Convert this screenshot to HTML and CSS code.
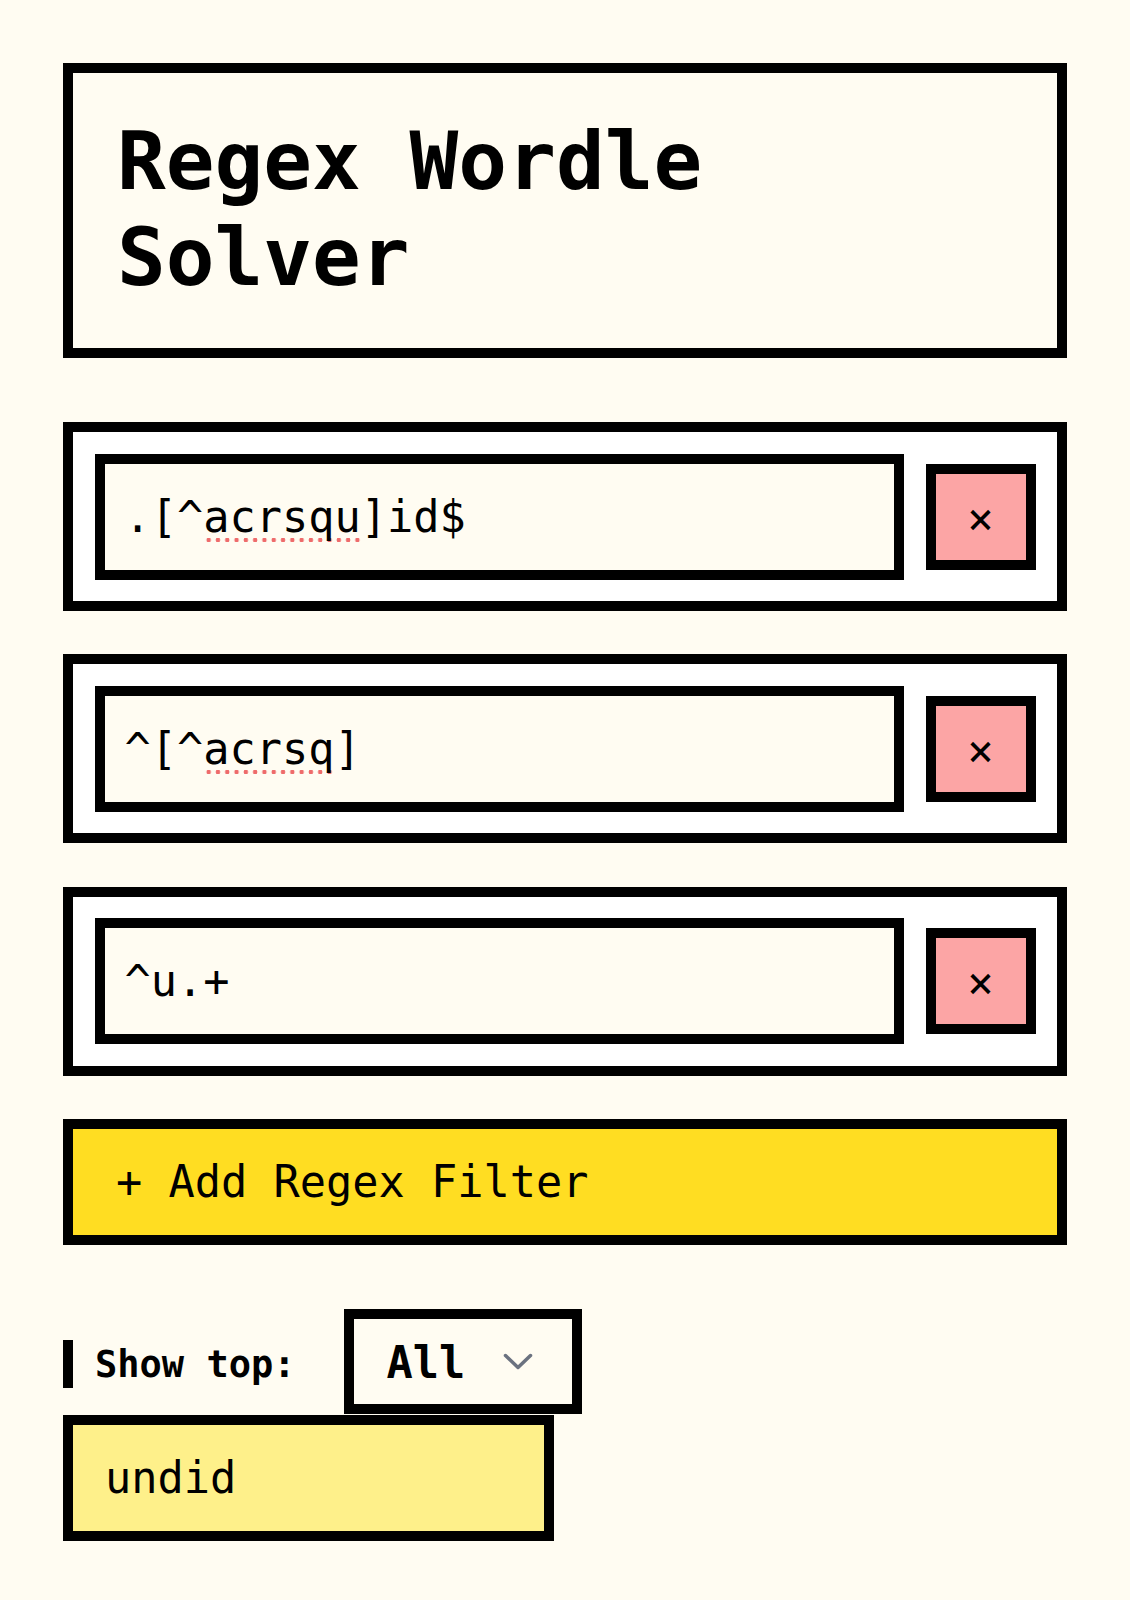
FILE: index.html
```html
<!DOCTYPE html>
<html lang="en">
<head>
<meta charset="utf-8">
<title>Regex Wordle Solver</title>
<link rel="stylesheet" href="styles.css">
</head>
<body>
<main class="app">
  <header class="title-card">
    <h1 class="title">Regex Wordle Solver</h1>
  </header>

  <section class="filters">
    <div class="filter-row">
      <div class="regex-input" role="textbox" contenteditable="true" spellcheck="false">.[^<span class="misspelled">acrsqu</span>]id$</div>
      <button class="delete-btn" type="button" aria-label="Remove filter">×</button>
    </div>
    <div class="filter-row">
      <div class="regex-input" role="textbox" contenteditable="true" spellcheck="false">^[^<span class="misspelled">acrsq</span>]</div>
      <button class="delete-btn" type="button" aria-label="Remove filter">×</button>
    </div>
    <div class="filter-row">
      <div class="regex-input" role="textbox" contenteditable="true" spellcheck="false">^u.+</div>
      <button class="delete-btn" type="button" aria-label="Remove filter">×</button>
    </div>
    <button class="add-btn" type="button">+ Add Regex Filter</button>
  </section>

  <section class="results">
    <div class="show-top">
      <label class="show-label" for="top-count">Show top:</label>
      <div class="select-wrap">
        <select id="top-count" class="top-select">
          <option>All</option>
          <option>10</option>
          <option>25</option>
        </select>
        <svg class="chevron" viewBox="0 0 30 17" width="30" height="17" aria-hidden="true">
          <path d="M2.5 2.5 L15 14.5 L27.5 2.5" fill="none" stroke="#6b7280" stroke-width="3.5" stroke-linecap="round" stroke-linejoin="round"/>
        </svg>
      </div>
    </div>
    <ul class="word-grid">
      <li class="word">undid</li>
    </ul>
  </section>
</main>
</body>
</html>
```

FILE: styles.css
```css
* {
  box-sizing: border-box;
}

body {
  margin: 0;
  background: #fffcf2;
  color: #000;
  font-family: "DejaVu Sans Mono", "Liberation Mono", monospace;
}

.app {
  padding: 63px 63px 40px;
}

.title-card {
  border: 10px solid #000;
  padding: 40px 44px 43px;
  margin-bottom: 64px;
}

.title {
  margin: 0;
  font-size: 81px;
  line-height: 96px;
  font-weight: 700;
}

.filters {
  display: flex;
  flex-direction: column;
  gap: 43.3px;
}

.filter-row {
  display: flex;
  align-items: center;
  gap: 22px;
  border: 10px solid #000;
  background: #fff;
  padding: 21.5px;
}

.regex-input {
  flex: 1;
  height: 126px;
  border: 10px solid #000;
  background: #fffcf2;
  padding: 0 20px;
  font-size: 43.6px;
  line-height: 106px;
  white-space: pre;
  outline: none;
}

.misspelled {
  background-image: radial-gradient(circle, #ee6b6b 2px, transparent 2.5px);
  background-size: 9.3px 6px;
  background-repeat: repeat-x;
  background-position: 1px 45px;
}

.delete-btn {
  width: 110px;
  height: 106px;
  flex: none;
  border: 10px solid #000;
  background: #fca5a5;
  color: #000;
  font-family: inherit;
  font-size: 44px;
  line-height: 1;
  padding: 4px 0 0;
  display: flex;
  align-items: center;
  justify-content: center;
  border-radius: 0;
}

.add-btn {
  height: 126px;
  border: 10px solid #000;
  background: #ffdd22;
  color: #000;
  text-align: left;
  padding: 0 0 0 43px;
  font-family: inherit;
  font-size: 43.6px;
  border-radius: 0;
}

.show-top {
  display: flex;
  align-items: center;
  margin-top: 64px;
}

.show-label {
  border-left: 10px solid #000;
  padding: 2px 0 0 22px;
  margin: 5px 49px 0 0;
  line-height: 46px;
  font-size: 37px;
  font-weight: 700;
}

.select-wrap {
  position: relative;
  width: 238px;
  height: 105px;
}

.top-select {
  display: block;
  appearance: none;
  -webkit-appearance: none;
  width: 100%;
  height: 100%;
  border: 10px solid #000;
  border-radius: 0;
  background: #fffcf2;
  color: #000;
  font-family: "DejaVu Sans Mono", "Liberation Mono", monospace;
  font-size: 43.6px;
  font-weight: 700;
  padding: 4px 0 0 32px;
}

.chevron {
  position: absolute;
  left: 159px;
  top: 44px;
  pointer-events: none;
}

.word-grid {
  list-style: none;
  margin: 1px 0 0;
  padding: 0;
  display: grid;
  grid-template-columns: 1fr 1fr;
  gap: 22px;
}

.word {
  height: 126px;
  border: 10px solid #000;
  background: #fef08a;
  display: flex;
  align-items: center;
  padding-left: 32px;
  font-size: 43.6px;
}
```
